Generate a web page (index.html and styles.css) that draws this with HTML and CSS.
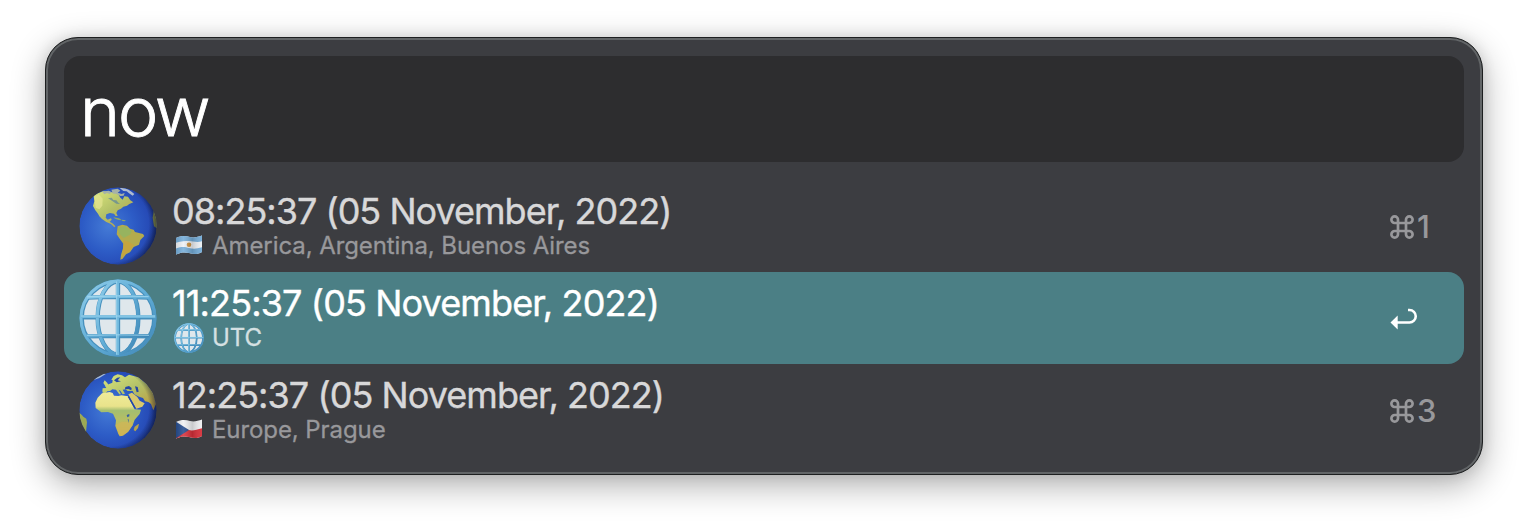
FILE: index.html
```html
<!DOCTYPE html>
<html lang="en">
<head>
<meta charset="utf-8">
<title>now</title>
<link rel="stylesheet" href="styles.css">
</head>
<body>
<svg class="defs" width="0" height="0" aria-hidden="true">
  <defs>
    <radialGradient id="sea" cx=".38" cy=".5" r=".66">
      <stop offset="0" stop-color="#457bd6"/><stop offset=".5" stop-color="#2d5cc6"/><stop offset=".85" stop-color="#2548b4"/><stop offset="1" stop-color="#182b72"/>
    </radialGradient>
    <linearGradient id="land" x1="0" y1="0" x2=".9" y2="1">
      <stop offset="0" stop-color="#dbe67c"/><stop offset=".5" stop-color="#b3c168"/><stop offset="1" stop-color="#bd9b3e"/>
    </linearGradient>
    <linearGradient id="africa" x1="0" y1="0" x2="0" y2="1">
      <stop offset="0" stop-color="#f0eb9a"/><stop offset=".32" stop-color="#e9e38b"/><stop offset=".42" stop-color="#a3be70"/><stop offset=".65" stop-color="#b8be62"/><stop offset="1" stop-color="#c6b052"/>
    </linearGradient>
    <radialGradient id="shade" cx=".4" cy=".47" r=".64">
      <stop offset=".78" stop-color="#08102e" stop-opacity="0"/><stop offset="1" stop-color="#08102e" stop-opacity=".75"/>
    </radialGradient>
    <linearGradient id="mesh" x1="0" y1="0" x2="1" y2="1">
      <stop offset="0" stop-color="#90cdea"/><stop offset=".5" stop-color="#62aed7"/><stop offset="1" stop-color="#3f86b6"/>
    </linearGradient>
    <linearGradient id="fold" x1="0" y1="0" x2="1" y2="0">
      <stop offset="0" stop-color="#000" stop-opacity=".12"/><stop offset=".3" stop-color="#fff" stop-opacity=".12"/><stop offset=".62" stop-color="#000" stop-opacity=".16"/><stop offset="1" stop-color="#fff" stop-opacity=".05"/>
    </linearGradient>
    <clipPath id="disc"><circle cx="144" cy="138" r="116"/></clipPath>
    <clipPath id="flag"><path d="M1 3C7 0 11 1 15 2S23 2 27 .5V17C22 20 18 19 14 18S6 17 1 19.500Z"/></clipPath>
    <symbol id="meridians" viewBox="27 21 234 234">
      <circle cx="144" cy="138" r="113" fill="#dfe7ec"/>
      <g fill="none" stroke="#4690bd" stroke-width="13">
        <circle cx="144" cy="138" r="109"/>
        <ellipse cx="144" cy="138" rx="61" ry="109"/>
        <path d="M144 26V250M31 136H257M50 77Q144 72 238 77M49 193Q144 190 239 193"/>
      </g>
      <g fill="none" stroke="url(#mesh)" stroke-width="9">
        <circle cx="144" cy="138" r="111"/>
        <ellipse cx="143" cy="137" rx="61" ry="109"/>
        <path d="M51 76Q144 71 237 76M50 192Q144 189 238 192"/>
      </g>
      <path d="M143 27V249M32 134H256" fill="none" stroke="#70b8dd" stroke-width="8"/>
      <path d="M140 28V248M33 132H255M52 74Q144 69 236 74M51 190Q144 187 237 190" fill="none" stroke="#a4d8ef" stroke-width="2.500"/>
    </symbol>
  </defs>
</svg>
<main class="panel">
  <div class="search"><span class="query">now</span></div>
  <ul class="results">
    <li class="row">
      <svg class="icon" viewBox="27 21 234 234">
        <g clip-path="url(#disc)">
          <circle cx="144" cy="138" r="116" fill="url(#sea)"/>
          <path d="M71 48L84 40 99 34 117 35 137 38 146 44 151 53 158 59 163 49 174 50 181 61 190 67 178 72 171 77 160 80 153 86 143 91 139 99 143 108 137 108 132 101 120 99 109 103 107 113 113 119 123 115 125 119 119 125 129 131 136 139 133 142 123 132 109 126 96 117 88 109 84 101 76 91 69 78 73 64Z" fill="url(#land)"/>
          <path d="M73 50L86 43 98 56 97 77 88 88 77 83Z" fill="#e5e593" opacity=".7"/>
          <path d="M97 35L116 32 125 36 119 42 111 39 103 43ZM124 29L143 26 151 32 143 38 155 42 164 39 161 47 151 48 139 41 129 41Z" fill="#a6b2a7"/>
          <path d="M149 24Q172 21 193 42L188 47 177 40 170 34 160 33Z" fill="#aebbd0"/>
          <path d="M114 55L125 53 130 60 139 61 145 68 150 72 139 71 127 63Z" fill="#4672a8" opacity=".55"/>
          <path d="M130 112L147 115 156 121 146 120 135 116ZM157 119L167 121 165 124 156 123Z" fill="#8fa763"/>
          <path d="M143 139L157 134 171 137 180 146 191 149 195 156 219 162 223 168 211 180 207 194 191 201 180 217 168 223 158 236 151 239 153 224 159 205 160 191 149 176 140 163Z" fill="#b4ab4d"/>
          <path d="M161 180L178 187 192 195 180 212 165 222 155 236 159 210Z" fill="#c9a33c" opacity=".8"/>
          <path d="M145 143L165 139 185 153 180 164 161 174 147 160Z" fill="#8db566" opacity=".75"/>
          <path d="M251 93Q263 113 260 145L252 139 248 113Z" fill="#8f9444"/>
          <circle cx="144" cy="138" r="116" fill="url(#shade)"/>
        </g>
      </svg>
      <div class="copy">
        <span class="title t1">08:25:37 (05 November, 2022)</span>
        <span class="subtitle">
          <svg class="flag" viewBox="0 0 28 21"><g clip-path="url(#flag)"><path fill="#eef1f5" d="M0 0H28V21H0Z"/><path fill="#75add9" d="M0 0H28V6C22 8 18 6 14 6S6 6 0 8ZM0 14C7 11 10 12 14 13S22 14 28 12V21H0Z"/><circle cx="14" cy="9.700" r="2.300" fill="#cb9140"/><path fill="url(#fold)" d="M0 0H28V21H0Z"/></g></svg>
          <span class="place p1">America, Argentina, Buenos Aires</span>
        </span>
      </div>
      <span class="key"><svg class="cmd" viewBox="0 0 24 24"><path d="M8 8H16V16H8ZM8 8H4.800A3.300 3.300 0 1 1 8 4.700ZM16 8V4.700A3.300 3.300 0 1 1 19.200 8ZM16 16H19.200A3.300 3.300 0 1 1 16 19.300ZM8 16V19.300A3.300 3.300 0 1 1 4.800 16Z"/></svg>1</span>
    </li>
    <li class="row selected">
      <svg class="icon" viewBox="27 21 234 234"><use href="#meridians" x="27" y="21" width="234" height="234"/></svg>
      <div class="copy">
        <span class="title t2">11:25:37 (05 November, 2022)</span>
        <span class="subtitle">
          <svg class="flag globe" viewBox="27 21 234 234"><use href="#meridians" x="27" y="21" width="234" height="234"/></svg>
          <span class="place p2">UTC</span>
        </span>
      </div>
      <span class="key"><svg class="return" viewBox="0 0 28 22"><path d="M7 14.500H19.500A5.800 5.800 0 0 0 19.500 2H18" fill="none" stroke="#fff" stroke-width="2.600"/><path d="M.5 14.500L7.700 7.500V21.500Z" fill="#fff"/></svg></span>
    </li>
    <li class="row">
      <svg class="icon" viewBox="27 21 234 234">
        <g clip-path="url(#disc)">
          <circle cx="144" cy="138" r="116" fill="url(#sea)"/>
          <path d="M69 49Q83 35 101 27L107 30 88 42Z" fill="#a9bdd5"/>
          <path d="M100 57L104 49 112 57 115 63 106 66ZM97 81L98 73 109 72 105 66 116 61 127 56 128 48 124 47 131 36 143 31 156 34 165 40 177 32 205 40 230 60 249 87 258 120 250 139 243 120 235 114 225 112 219 102 207 98 193 91 188 81 173 81 167 76 158 77 165 89 158 91 151 80 146 77 153 91 148 91 138 77 127 76 120 81 112 82 106 88 98 86Z" fill="url(#land)"/>
          <path d="M142 41L151 40 143 49 153 52 140 55 132 49ZM166 69L177 66 185 72 184 79 175 75 165 76ZM195 67L203 69 206 83 200 85Z" fill="#2546a4"/>
          <path d="M96 88L119 84 128 87 132 95 145 96 154 94 174 97 181 112 194 136 213 137 209 150 194 167 188 184 175 203 159 215 149 217 145 210 136 186 138 169 129 149 114 144 94 145 77 132 76 116 83 101Z" fill="url(#africa)"/>
          <path d="M175 91L186 86 202 99 209 110 224 118 217 128 199 134 187 113Z" fill="#d9c86c"/>
          <path d="M175 98L182 109 195 132" fill="none" stroke="#2546a4" stroke-width="4"/>
          <path d="M137 184L155 173 185 174 188 184 172 205 154 216 147 211Z" fill="#d3b656" opacity=".65"/>
          <path d="M170 153L178 150 178 157 172 160ZM173 166L176 166 176 178Z" fill="#3860a0"/>
          <path d="M204 181L207 180 204 192 196 202 191 198 194 188Z" fill="#b8a34c"/>
          <path d="M24 143Q36 152 40 158L49 164 51 175 48 205 43 212 29 179Z" fill="#9ca954"/>
          <circle cx="144" cy="138" r="116" fill="url(#shade)"/>
        </g>
      </svg>
      <div class="copy">
        <span class="title t3">12:25:37 (05 November, 2022)</span>
        <span class="subtitle">
          <svg class="flag" viewBox="0 0 28 21"><g clip-path="url(#flag)"><path fill="#f0f1f3" d="M0 0H28V21H0Z"/><path fill="#d9303a" d="M0 12C6 9 11 10 14 11S22 11 28 9V21H0Z"/><path fill="#244b8d" d="M0 2L14 11 0 20Z"/><path fill="url(#fold)" d="M0 0H28V21H0Z"/></g></svg>
          <span class="place p3">Europe, Prague</span>
        </span>
      </div>
      <span class="key"><svg class="cmd" viewBox="0 0 24 24"><path d="M8 8H16V16H8ZM8 8H4.800A3.300 3.300 0 1 1 8 4.700ZM16 8V4.700A3.300 3.300 0 1 1 19.200 8ZM16 16H19.200A3.300 3.300 0 1 1 16 19.300ZM8 16V19.300A3.300 3.300 0 1 1 4.800 16Z"/></svg>3</span>
    </li>
  </ul>
</main>
</body>
</html>
```
FILE: styles.css
```css
* { box-sizing: border-box; }
body {
  margin: 0;
  height: 528px;
  padding: 37px 45px 53px;
  background: #fff;
  font-family: Inter, "Liberation Sans", sans-serif;
  overflow: hidden;
}
.defs { display: block; height: 0; }
.panel {
  height: 438px;
  padding: 18px;
  border: 1px solid #1d1f20;
  border-radius: 33px;
  background: #3c3d41;
  box-shadow: inset 0 0 0 2px #626567, 0 10px 34px rgba(0, 0, 0, .32), 0 0 14px rgba(0, 0, 0, .1);
}
.search {
  height: 106px;
  padding-left: 16px;
  border-radius: 16px;
  background: #2d2d2f;
  display: flex;
  align-items: center;
}
.query {
  color: #fff;
  font-size: 68px;
  font-weight: 300;
  -webkit-text-stroke: .9px currentColor;
  line-height: 80px;
  padding-top: 3px;
  letter-spacing: -2.1px;
}
.results { list-style: none; margin: 18px 0 0; padding: 0; }
.row {
  height: 92px;
  padding: 0 15px;
  display: flex;
  align-items: center;
  gap: 15px;
  border-radius: 16px;
  color: #d8d8d9;
}
.selected { background: #4b7f85; color: #fff; }
.icon { width: 78px; height: 78px; flex: none; }
.copy { flex: 1; display: flex; flex-direction: column; padding-bottom: 3px; }
.title {
  font-size: 36px;
  font-weight: 400;
  -webkit-text-stroke: .4px currentColor;
  line-height: 42px;
  white-space: nowrap;
}
.t1 { letter-spacing: -.98px; }
.t2 { letter-spacing: -.86px; }
.t3 { letter-spacing: -.94px; }
.subtitle {
  display: flex;
  align-items: center;
  height: 28px;
  gap: 9px;
  font-size: 24px;
  font-weight: 400;
  line-height: 28px;
  color: #98989b;
  white-space: nowrap;
}
.place { letter-spacing: -.08px; -webkit-text-stroke: .3px currentColor; }
.selected .subtitle { color: #d5e0e2; }
.flag { width: 28px; height: 21px; margin-left: 3px; flex: none; }
.globe { width: 30px; height: 30px; margin: 0 -1px 0 2px; }
.key {
  width: 59px;
  padding-top: 2px;
  display: flex;
  align-items: center;
  gap: 3px;
  font-size: 31px;
  font-weight: 500;
  letter-spacing: -1px;
  line-height: 40px;
  color: #98989b;
}
.cmd { width: 24px; height: 24px; fill: none; stroke: currentColor; stroke-width: 2.7; }
.return { width: 28px; height: 22px; }
```
